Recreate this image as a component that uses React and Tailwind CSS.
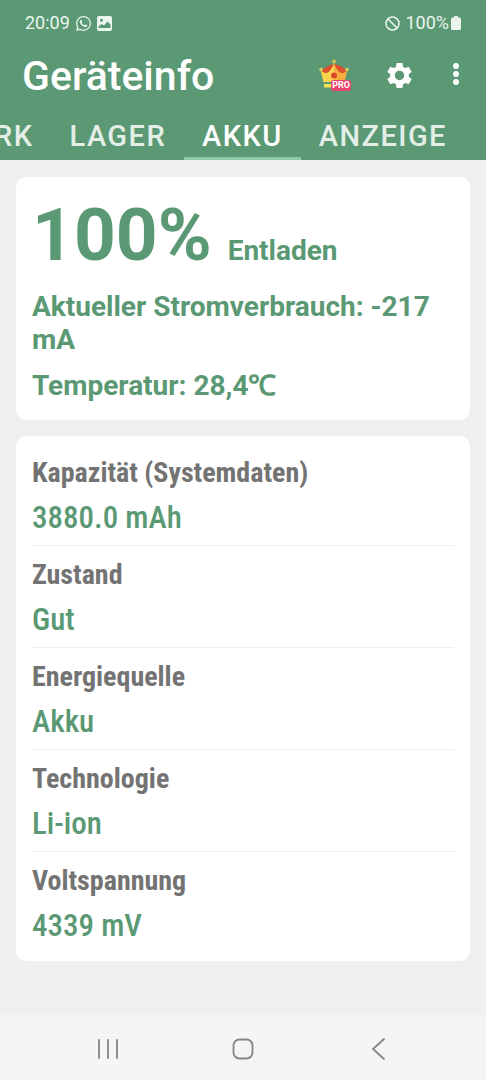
import React, { useEffect, useRef, useState } from 'react';
import { FaWhatsapp } from 'react-icons/fa';
import { MdSettings } from 'react-icons/md';

const TABS = ['NETZWERK', 'LAGER', 'AKKU', 'ANZEIGE'];

const DETAILS = [
  { label: 'Kapazität (Systemdaten)', value: '3880.0 mAh' },
  { label: 'Zustand', value: 'Gut' },
  { label: 'Energiequelle', value: 'Akku' },
  { label: 'Technologie', value: 'Li-ion' },
  { label: 'Voltspannung', value: '4339 mV' },
];

const PictureIcon = () => (
  <svg viewBox="0 0 15 15" className="size-[15px]" fill="currentColor" aria-hidden="true">
    <path
      fillRule="evenodd"
      d="M2 0H13Q15 0 15 2V13Q15 15 13 15H2Q0 15 0 13V2Q0 0 2 0ZM4.500 2.800A1.500 1.500 0 1 0 4.500 5.800A1.500 1.500 0 1 0 4.500 2.800ZM1.500 12H13.500V8.500L10.500 5.500L7 9.500L4.500 8L1.500 10.500Z"
    />
  </svg>
);

const BlockedIcon = () => (
  <svg viewBox="0 0 15 15" className="size-[15px]" fill="none" stroke="currentColor" strokeWidth="1.600" aria-hidden="true">
    <circle cx="7.500" cy="7.500" r="6.500" />
    <path d="M3 3L12 12" />
  </svg>
);

const BatteryIcon = () => (
  <svg viewBox="0 0 10 14" className="h-[14px] w-[10px]" fill="currentColor" aria-hidden="true">
    <rect x="3" y="0" width="4" height="3" rx="0.500" />
    <rect x="0" y="1.500" width="10" height="12.500" rx="1.500" />
  </svg>
);

const StatusBar = () => (
  <div className="flex h-[46px] items-center justify-between px-[25px] text-lg text-[#eaf5ee]">
    <div className="flex items-center gap-[5px]">
      <span>20:09</span>
      <FaWhatsapp className="size-[17px]" />
      <PictureIcon />
    </div>
    <div className="flex items-center">
      <BlockedIcon />
      <span className="ml-[5px] mr-0.5">100%</span>
      <BatteryIcon />
    </div>
  </div>
);

const CrownIcon = () => (
  <span className="relative block size-8">
    <svg viewBox="0 0 32 32" className="size-8" aria-hidden="true">
      <path d="M3 11 Q9 6 15 5 Q22 6 27 11 L25 20 H5 Z" fill="#d9502f" />
      <path d="M1.500 11 Q6 16 9.500 13 Q13 10 15 4 V23 H4.500 Z" fill="#fbd34d" />
      <path d="M28.500 11 Q24 16 20.500 13 Q17 10 15 4 V23 H25.500 Z" fill="#f9ae3f" />
      <path d="M5 25H15V28.500H5Z" fill="#fbe04d" />
      <path d="M15 25H25V28.500H15Z" fill="#f9ae3f" />
      <circle cx="15" cy="16.500" r="3" fill="#dc4a2b" />
      <circle cx="15" cy="2.500" r="2" fill="#c8c55c" />
      <circle cx="2" cy="10.500" r="1.800" fill="#d9cf62" />
      <circle cx="28" cy="10.500" r="1.800" fill="#d9cf62" />
    </svg>
    <span className="absolute right-0 bottom-0 rounded-[3px] bg-[#e8446c] px-px text-[9px] leading-[11px] font-bold text-white">
      PRO
    </span>
  </span>
);

const Toolbar = () => (
  <div className="flex h-[58px] items-center pr-5 pl-[22px]">
    <h1 className="flex-1 pt-0.5 text-[41px] leading-none font-medium text-white">Geräteinfo</h1>
    <button type="button" aria-label="Pro-Version" className="mr-[33px]">
      <CrownIcon />
    </button>
    <button type="button" aria-label="Einstellungen" className="mr-[31px] text-white">
      <MdSettings className="size-[31px]" />
    </button>
    <button type="button" aria-label="Mehr Optionen" className="text-white">
      <svg viewBox="0 0 20 32" className="h-8 w-5" fill="currentColor">
        <circle cx="10" cy="7" r="3" />
        <circle cx="10" cy="15" r="3" />
        <circle cx="10" cy="23" r="3" />
      </svg>
    </button>
  </div>
);

const TabBar = ({ active, onSelect }) => {
  const stripRef = useRef(null);
  const activeRef = useRef(null);

  // Keep the active tab in the middle of the strip
  useEffect(() => {
    const strip = stripRef.current;
    const tab = activeRef.current;
    if (!strip || !tab) return;
    strip.scrollLeft = tab.offsetLeft + tab.offsetWidth / 2 - strip.clientWidth / 2;
  }, [active]);

  return (
    <div ref={stripRef} role="tablist" className="relative flex h-14 overflow-hidden pr-8">
      {TABS.map((tab) => (
        <button
          key={tab}
          ref={tab === active ? activeRef : null}
          type="button"
          role="tab"
          aria-selected={tab === active}
          onClick={() => onSelect(tab)}
          className={`shrink-0 border-b-[3px] px-[18px] pt-3 text-[29px] leading-[33px] font-medium tracking-wider ${
            tab === active ? 'border-[#8cc9a6] text-white' : 'border-transparent text-[#e3eee7]'
          }`}
        >
          {tab}
        </button>
      ))}
    </div>
  );
};

const SummaryCard = () => (
  <section className="rounded-[10px] bg-white px-4 pt-4 pb-[18px] text-[28px] leading-[33px] font-bold text-[#5a9974]">
    <div className="flex items-baseline gap-4">
      <span className="text-[73px] leading-[84px]">100%</span>
      <span>Entladen</span>
    </div>
    <p className="mt-[13px]">Aktueller Stromverbrauch: -217 mA</p>
    <p className="mt-[13px]">Temperatur: 28,4℃</p>
  </section>
);

const DetailsCard = () => (
  <dl className="rounded-[10px] bg-white px-4 py-2 font-['Roboto_Condensed',Roboto,sans-serif]">
    {DETAILS.map(({ label, value }) => (
      <div key={label} className="border-b border-[#efefef] pt-3 pb-2 last:border-b-0">
        <dt className="text-[28px] leading-[33px] font-bold text-[#737373]">{label}</dt>
        <dd className="mt-2.5 text-[31px] leading-[38px] font-medium text-[#5a9974]">{value}</dd>
      </div>
    ))}
  </dl>
);

const NavigationBar = () => (
  <nav className="flex h-[65px] items-center justify-around bg-[#f5f5f5] px-10 pt-0.5 text-[#858585]">
    <button type="button" aria-label="Letzte Apps">
      <svg viewBox="0 0 24 24" className="size-6" fill="none" stroke="currentColor" strokeWidth="1.800" strokeLinecap="round">
        <path d="M3 3V21M12 3V21M21 3V21" />
      </svg>
    </button>
    <button type="button" aria-label="Startseite">
      <svg viewBox="0 0 24 24" className="size-6" fill="none" stroke="currentColor" strokeWidth="1.800">
        <rect x="2.500" y="2.500" width="19" height="19" rx="6" />
      </svg>
    </button>
    <button type="button" aria-label="Zurück">
      <svg viewBox="0 0 24 24" className="size-6" fill="none" stroke="currentColor" strokeWidth="1.800" strokeLinecap="round">
        <path d="M18 2L7 12L18 22" />
      </svg>
    </button>
  </nav>
);

const App = () => {
  const [activeTab, setActiveTab] = useState('AKKU');

  return (
    <div className="flex min-h-screen flex-col bg-[#efefef] font-[Roboto,sans-serif]">
      <header className="bg-[#5a9974]">
        <StatusBar />
        <Toolbar />
        <TabBar active={activeTab} onSelect={setActiveTab} />
      </header>
      <main className="flex flex-1 flex-col gap-4 px-4 pt-[17px] pb-4">
        <SummaryCard />
        <DetailsCard />
      </main>
      <NavigationBar />
    </div>
  );
};

export default App;
